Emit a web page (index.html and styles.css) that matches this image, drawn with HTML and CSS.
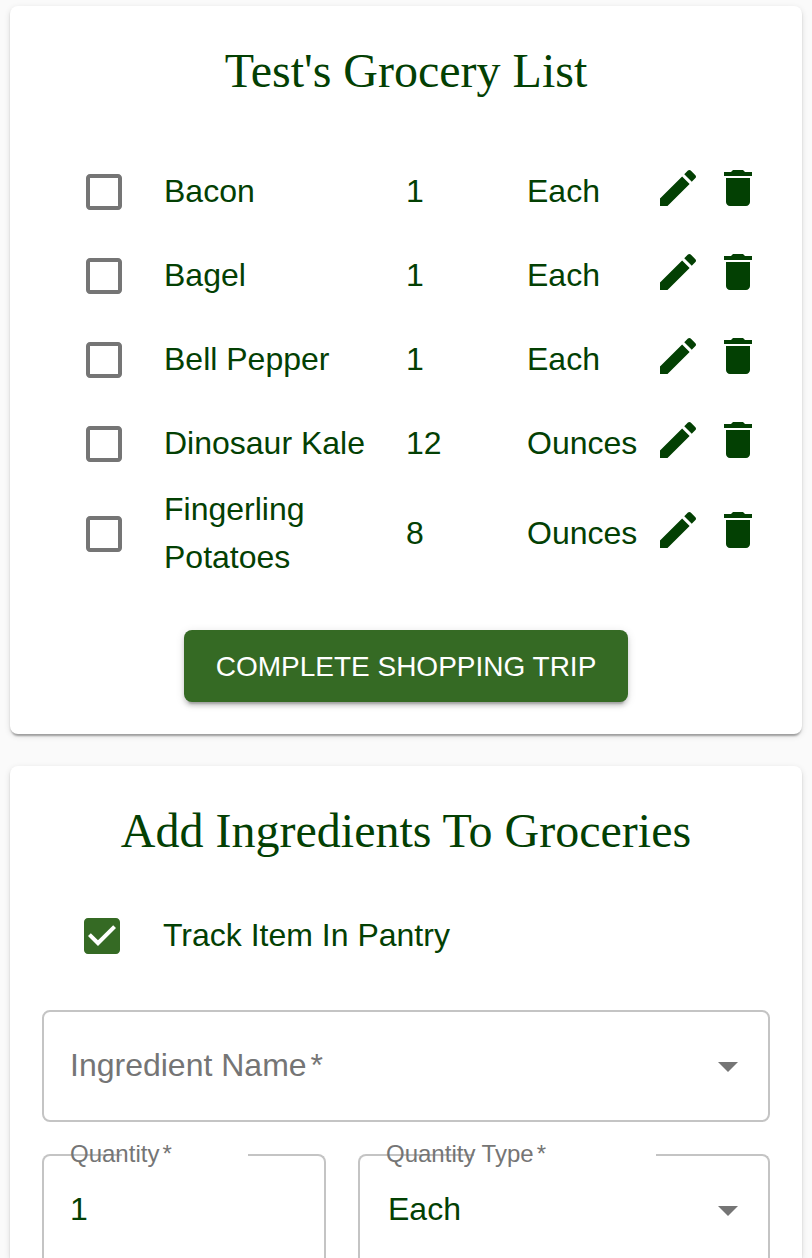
FILE: index.html
```html
<!DOCTYPE html>
<html lang="en">
<head>
<meta charset="utf-8">
<title>Grocery List</title>
<link rel="stylesheet" href="styles.css">
</head>
<body>
<svg class="sprite" aria-hidden="true">
  <symbol id="box" viewBox="0 0 24 24"><path d="M19 5v14H5V5h14m0-2H5c-1.1 0-2 .9-2 2v14c0 1.1.9 2 2 2h14c1.1 0 2-.9 2-2V5c0-1.1-.9-2-2-2z"/></symbol>
  <symbol id="checked" viewBox="0 0 24 24"><path d="M19 3H5c-1.11 0-2 .9-2 2v14c0 1.1.89 2 2 2h14c1.11 0 2-.9 2-2V5c0-1.1-.89-2-2-2zm-9 14l-5-5 1.41-1.41L10 14.17l7.59-7.59L19 8l-9 9z"/></symbol>
  <symbol id="edit" viewBox="0 0 24 24"><path d="M3 17.25V21h3.75L17.81 9.94l-3.75-3.75L3 17.25zM20.71 7.04c.39-.39.39-1.02 0-1.41l-2.34-2.34c-.39-.39-1.02-.39-1.41 0l-1.83 1.83 3.75 3.75 1.83-1.83z"/></symbol>
  <symbol id="trash" viewBox="0 0 24 24"><path d="M6 19c0 1.1.9 2 2 2h8c1.1 0 2-.9 2-2V7H6v12zM19 4h-3.500l-1-1h-5l-1 1H5v2h14V4z"/></symbol>
  <symbol id="arrow" viewBox="0 0 24 24"><path d="M7 10l5 5 5-5z"/></symbol>
</svg>
<main class="page">
  <section class="card list-card">
    <h1 class="title">Test's Grocery List</h1>
    <div class="items">
      <div class="item"><svg class="icon box"><use href="#box"/></svg><span class="name">Bacon</span><span class="qty">1</span><span class="unit">Each</span><svg class="icon act"><use href="#edit"/></svg><svg class="icon act"><use href="#trash"/></svg></div>
      <div class="item"><svg class="icon box"><use href="#box"/></svg><span class="name">Bagel</span><span class="qty">1</span><span class="unit">Each</span><svg class="icon act"><use href="#edit"/></svg><svg class="icon act"><use href="#trash"/></svg></div>
      <div class="item"><svg class="icon box"><use href="#box"/></svg><span class="name">Bell Pepper</span><span class="qty">1</span><span class="unit">Each</span><svg class="icon act"><use href="#edit"/></svg><svg class="icon act"><use href="#trash"/></svg></div>
      <div class="item"><svg class="icon box"><use href="#box"/></svg><span class="name">Dinosaur Kale</span><span class="qty">12</span><span class="unit">Ounces</span><svg class="icon act"><use href="#edit"/></svg><svg class="icon act"><use href="#trash"/></svg></div>
      <div class="item tall"><svg class="icon box"><use href="#box"/></svg><span class="name">Fingerling<br>Potatoes</span><span class="qty">8</span><span class="unit">Ounces</span><svg class="icon act"><use href="#edit"/></svg><svg class="icon act"><use href="#trash"/></svg></div>
    </div>
    <button class="complete" type="button">COMPLETE SHOPPING TRIP</button>
  </section>
  <section class="card add-card">
    <h2 class="title">Add Ingredients To Groceries</h2>
    <div class="track"><svg class="icon checked"><use href="#checked"/></svg><span class="track-label">Track Item In Pantry</span></div>
    <div class="field name-field"><span class="placeholder">Ingredient Name<span class="star">*</span></span><svg class="icon arrow"><use href="#arrow"/></svg></div>
    <div class="pair">
      <div class="field notched quantity"><span class="gap"></span><span class="label">Quantity<span class="star">*</span></span><span class="value">1</span></div>
      <div class="field notched type"><span class="gap"></span><span class="label">Quantity Type<span class="star">*</span></span><span class="value">Each</span><svg class="icon arrow"><use href="#arrow"/></svg></div>
    </div>
  </section>
</main>
</body>
</html>
```

FILE: styles.css
```css
* { box-sizing: border-box; }
body {
  margin: 0;
  background: #fafafa;
  color: #034003;
  font: 32px/48px "Liberation Sans", Arial, sans-serif;
}
.sprite { display: none; }
.page {
  display: flex;
  flex-direction: column;
  gap: 32px;
  height: 1258px;
  padding: 6px 10px 0;
  overflow: hidden;
}
.card {
  background: #fff;
  border-radius: 8px;
  box-shadow: 0 4px 2px -2px rgba(0,0,0,.2), 0 2px 2px rgba(0,0,0,.14), 0 2px 6px rgba(0,0,0,.12);
}
.list-card { flex: none; height: 728px; }
.add-card { height: 492px; padding: 0 32px; border-radius: 8px 8px 0 0; }
.title {
  margin: 0;
  padding-top: 33px;
  height: 144px;
  text-align: center;
  font: 400 48px/64px "Liberation Serif", "Times New Roman", serif;
}
.icon { width: 48px; height: 48px; fill: currentColor; display: block; flex: none; }
.item {
  display: grid;
  grid-template-columns: 84px 242px 121px 127px 60px 48px;
  grid-template-rows: 84px;
  align-items: center;
  padding-left: 70px;
}
.item.tall { grid-template-rows: 96px; }
.item .box, .arrow { color: #757575; }
.act { margin-bottom: 8px; }
.item .act { justify-self: start; }
.name, .qty, .unit, .track-label, .placeholder, .value { padding-bottom: 2px; }
.complete {
  display: block;
  width: 444px;
  height: 72px;
  margin: 48px auto 0;
  padding: 2px 0 0;
  border: 0;
  border-radius: 8px;
  background: #356a24;
  color: #fff;
  font: 28px/70px "Liberation Sans", Arial, sans-serif;
  white-space: nowrap;
  box-shadow: 0 6px 2px -4px rgba(0,0,0,.2), 0 4px 4px rgba(0,0,0,.14), 0 2px 10px rgba(0,0,0,.12);
}
.track { display: flex; align-items: center; height: 52px; padding-left: 36px; gap: 37px; }
.checked { color: #356a24; }
.field {
  position: relative;
  display: flex;
  align-items: center;
  justify-content: space-between;
  height: 112px;
  border: 2px solid #c4c4c4;
  border-radius: 8px;
  padding: 0 16px 0 26px;
}
.name-field { margin-top: 48px; }
.placeholder, .label { color: #757575; white-space: nowrap; }
.star { margin-left: 4px; }
.label .star { margin-left: 3px; }
.pair { display: grid; grid-template-columns: 284px 412px; gap: 32px; margin-top: 32px; }
.notched {
  height: 104px;
  padding-top: 6px;
  border-bottom: 0;
  border-radius: 8px 8px 0 0;
}
.gap { position: absolute; top: -2px; height: 2px; background: #fff; }
.quantity .gap { left: 78px; width: 126px; }
.type .gap { left: 114px; width: 182px; }
.type .value { padding-left: 2px; }
.label { position: absolute; left: 26px; top: -18px; font-size: 24px; line-height: 32px; }
```
